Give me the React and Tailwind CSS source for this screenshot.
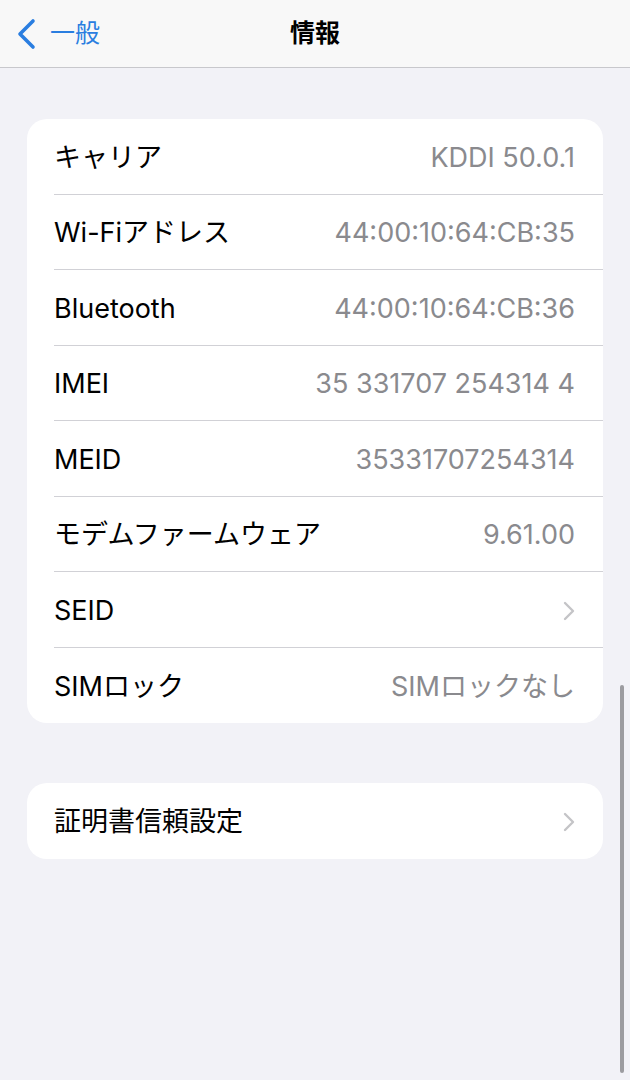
const rows = [
  { label: "キャリア", value: "KDDI 50.0.1" },
  { label: "Wi-Fiアドレス", value: "44:00:10:64:CB:35" },
  { label: "Bluetooth", value: "44:00:10:64:CB:36" },
  { label: "IMEI", value: "35 331707 254314 4" },
  { label: "MEID", value: "35331707254314" },
  { label: "モデムファームウェア", value: "9.61.00" },
  { label: "SEID", chevron: true },
  { label: "SIMロック", value: "SIMロックなし" }
];

function Chevron() {
  return (
    <svg width="12" height="20" viewBox="0 0 12 20" fill="none">
      <path d="M2 2l8 8-8 8" stroke="#c4c4c7" strokeWidth="2.4" strokeLinecap="round" strokeLinejoin="round" />
    </svg>
  );
}

function Row({ label, value, chevron, last }) {
  return (
    <div className="pl-[27px]">
      <div
        className={`flex h-[75.5px] items-center justify-between pt-[3px] pr-[28px] ${
          last ? "" : "border-b border-[#d1d1d6]"
        }`}
      >
        <span className="text-[27px] text-black">{label}</span>
        {chevron ? (
          <Chevron />
        ) : (
          <span className="text-[27px] text-[#8a8a8e]">{value}</span>
        )}
      </div>
    </div>
  );
}

export default function App() {
  return (
    <div
      className="relative h-[1080px] w-[630px] overflow-hidden bg-[#f2f2f7]"
      style={{ fontFamily: 'Inter, "Noto Sans CJK JP", sans-serif' }}
    >
      <div className="relative flex h-[68px] items-center border-b border-[#c8c8cc] bg-[#f8f8f8]">
        <div className="flex items-center pl-[15px]">
          <svg width="22" height="32" viewBox="0 0 22 32" fill="none">
            <path d="M18 3L5 16l13 13" stroke="#2a7ee0" strokeWidth="3.6" strokeLinecap="round" strokeLinejoin="round" />
          </svg>
          <span className="ml-[13px] text-[25px] text-[#2a7ee0]">一般</span>
        </div>
        <div className="absolute inset-0 flex items-center justify-center">
          <span className="text-[25px] font-bold text-black">情報</span>
        </div>
      </div>

      <div className="px-[27px] pt-[51px]">
        <div className="overflow-hidden rounded-[20px] bg-white">
          {rows.map((r, i) => (
            <Row key={r.label} {...r} last={i === rows.length - 1} />
          ))}
        </div>

        <div className="mt-[60px] overflow-hidden rounded-[20px] bg-white">
          <Row label="証明書信頼設定" chevron last />
        </div>
      </div>

      <div className="absolute left-[620px] top-[685px] h-[388px] w-[4px] rounded-full bg-[#9c9ca0]" />
    </div>
  );
}
